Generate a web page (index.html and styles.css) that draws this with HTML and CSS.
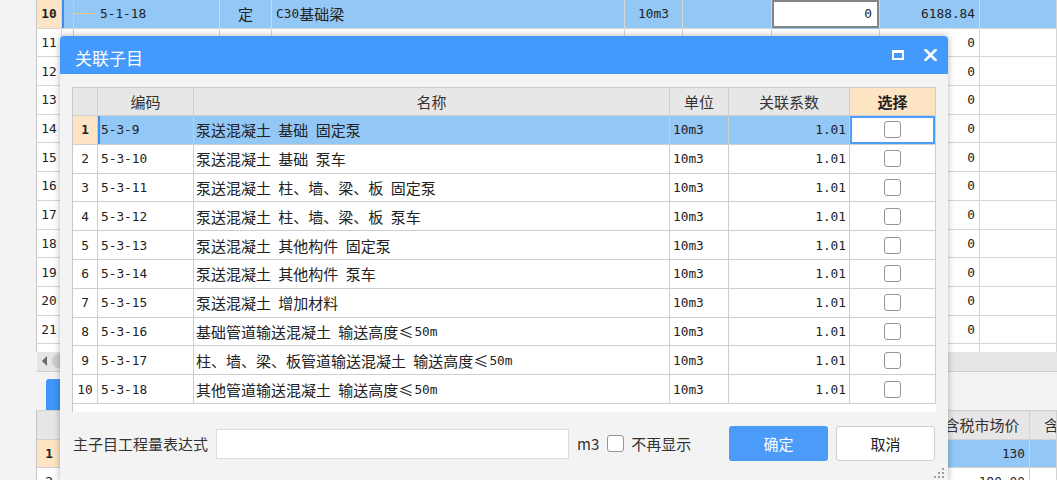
FILE: index.html
```html
<!DOCTYPE html>
<html lang="zh-CN">
<head>
<meta charset="utf-8">
<title>关联子目</title>
<link rel="stylesheet" href="styles.css">
</head>
<body>
<div class="bg">
  <div class="grid">
    <div class="grow sel">
      <div class="gc rn cur num b">10</div>
      <div class="gc code mark"><span class="tree tree-h"></span><span class="num">5-1-18</span></div>
      <div class="gc ctr">定</div>
      <div class="gc"><span class="num">C30</span>基础梁</div>
      <div class="gc ctr num">10m3</div>
      <div class="gc"></div>
      <div class="gc edit num">0</div>
      <div class="gc rt num">6188.84</div>
      <div class="gc"></div>
    </div>
    <div class="grow">
      <div class="gc rn num">11</div>
      <div class="gc code"><span class="tree"></span></div>
      <div class="gc ctr">主</div>
      <div class="gc muted">自动提示：请输入清单简称</div>
      <div class="gc"></div><div class="gc"></div><div class="gc"></div>
      <div class="gc rt num">0</div><div class="gc"></div>
    </div>
    <div class="grow"><div class="gc rn num">12</div><div class="gc"></div><div class="gc"></div><div class="gc"></div><div class="gc"></div><div class="gc"></div><div class="gc"></div><div class="gc rt num">0</div><div class="gc"></div></div>
    <div class="grow"><div class="gc rn num">13</div><div class="gc"></div><div class="gc"></div><div class="gc"></div><div class="gc"></div><div class="gc"></div><div class="gc"></div><div class="gc rt num">0</div><div class="gc"></div></div>
    <div class="grow"><div class="gc rn num">14</div><div class="gc"></div><div class="gc"></div><div class="gc"></div><div class="gc"></div><div class="gc"></div><div class="gc"></div><div class="gc rt num">0</div><div class="gc"></div></div>
    <div class="grow"><div class="gc rn num">15</div><div class="gc"></div><div class="gc"></div><div class="gc"></div><div class="gc"></div><div class="gc"></div><div class="gc"></div><div class="gc rt num">0</div><div class="gc"></div></div>
    <div class="grow"><div class="gc rn num">16</div><div class="gc"></div><div class="gc"></div><div class="gc"></div><div class="gc"></div><div class="gc"></div><div class="gc"></div><div class="gc rt num">0</div><div class="gc"></div></div>
    <div class="grow"><div class="gc rn num">17</div><div class="gc"></div><div class="gc"></div><div class="gc"></div><div class="gc"></div><div class="gc"></div><div class="gc"></div><div class="gc rt num">0</div><div class="gc"></div></div>
    <div class="grow"><div class="gc rn num">18</div><div class="gc"></div><div class="gc"></div><div class="gc"></div><div class="gc"></div><div class="gc"></div><div class="gc"></div><div class="gc rt num">0</div><div class="gc"></div></div>
    <div class="grow"><div class="gc rn num">19</div><div class="gc"></div><div class="gc"></div><div class="gc"></div><div class="gc"></div><div class="gc"></div><div class="gc"></div><div class="gc rt num">0</div><div class="gc"></div></div>
    <div class="grow"><div class="gc rn num">20</div><div class="gc"></div><div class="gc"></div><div class="gc"></div><div class="gc"></div><div class="gc"></div><div class="gc"></div><div class="gc rt num">0</div><div class="gc"></div></div>
    <div class="grow"><div class="gc rn num">21</div><div class="gc"></div><div class="gc"></div><div class="gc"></div><div class="gc"></div><div class="gc"></div><div class="gc"></div><div class="gc rt num">0</div><div class="gc"></div></div>
    <div class="grow tail"><div class="gc"></div><div class="gc"></div><div class="gc"></div><div class="gc"></div><div class="gc"></div><div class="gc"></div><div class="gc"></div><div class="gc"></div><div class="gc"></div></div>
  </div>

  <div class="hscroll"><span class="arrow"></span><span class="thumb"></span></div>
  <div class="tabs"><span class="tab"></span></div>

  <div class="lgrid">
    <div class="lrow head"><div class="lc"></div><div class="lc"></div><div class="lc ctr">含税市场价</div><div class="lc lastcol">含税市场合价</div></div>
    <div class="lrow sel"><div class="lc rn cur num b">1</div><div class="lc"></div><div class="lc rt num">130</div><div class="lc"></div></div>
    <div class="lrow"><div class="lc rn num">2</div><div class="lc"></div><div class="lc rt num top">190.00</div><div class="lc"></div></div>
  </div>
</div>

<div class="dialog">
  <div class="dtitle">
    <span class="ttl">关联子目</span>
    <span class="tbtn">
      <svg width="12" height="10" viewBox="0 0 12 10"><rect x="1" y="1.5" width="10" height="7.5" fill="none" stroke="#fff" stroke-width="2"/><rect x="0" y="0" width="12" height="3" fill="#fff"/></svg>
    </span>
    <span class="tbtn">
      <svg width="13" height="12" viewBox="0 0 13 12"><path d="M1.5 1 L11.5 11 M11.5 1 L1.5 11" stroke="#fff" stroke-width="2.6" stroke-linecap="square"/></svg>
    </span>
  </div>
  <div class="dbody">
    <div class="table">
      <div class="trow thead">
        <div class="tc"></div>
        <div class="tc ctr">编码</div>
        <div class="tc ctr">名称</div>
        <div class="tc ctr">单位</div>
        <div class="tc ctr">关联系数</div>
        <div class="tc ctr pick">选择</div>
      </div>
      <div class="trow sel">
        <div class="tc ctr rn cur num b">1</div>
        <div class="tc num mark">5-3-9</div>
        <div class="tc name">泵送混凝土 基础 固定泵</div>
        <div class="tc num">10m3</div>
        <div class="tc rt num">1.01</div>
        <div class="tc ctr focus"><span class="cb"></span></div>
      </div>
      <div class="trow">
        <div class="tc ctr rn num">2</div><div class="tc num">5-3-10</div>
        <div class="tc name">泵送混凝土 基础 泵车</div>
        <div class="tc num">10m3</div><div class="tc rt num">1.01</div>
        <div class="tc ctr"><span class="cb"></span></div>
      </div>
      <div class="trow">
        <div class="tc ctr rn num">3</div><div class="tc num">5-3-11</div>
        <div class="tc name">泵送混凝土 柱、墙、梁、板 固定泵</div>
        <div class="tc num">10m3</div><div class="tc rt num">1.01</div>
        <div class="tc ctr"><span class="cb"></span></div>
      </div>
      <div class="trow">
        <div class="tc ctr rn num">4</div><div class="tc num">5-3-12</div>
        <div class="tc name">泵送混凝土 柱、墙、梁、板 泵车</div>
        <div class="tc num">10m3</div><div class="tc rt num">1.01</div>
        <div class="tc ctr"><span class="cb"></span></div>
      </div>
      <div class="trow">
        <div class="tc ctr rn num">5</div><div class="tc num">5-3-13</div>
        <div class="tc name">泵送混凝土 其他构件 固定泵</div>
        <div class="tc num">10m3</div><div class="tc rt num">1.01</div>
        <div class="tc ctr"><span class="cb"></span></div>
      </div>
      <div class="trow">
        <div class="tc ctr rn num">6</div><div class="tc num">5-3-14</div>
        <div class="tc name">泵送混凝土 其他构件 泵车</div>
        <div class="tc num">10m3</div><div class="tc rt num">1.01</div>
        <div class="tc ctr"><span class="cb"></span></div>
      </div>
      <div class="trow">
        <div class="tc ctr rn num">7</div><div class="tc num">5-3-15</div>
        <div class="tc name">泵送混凝土 增加材料</div>
        <div class="tc num">10m3</div><div class="tc rt num">1.01</div>
        <div class="tc ctr"><span class="cb"></span></div>
      </div>
      <div class="trow">
        <div class="tc ctr rn num">8</div><div class="tc num">5-3-16</div>
        <div class="tc name">基础管道输送混凝土 输送高度<span class="le">≤</span><span class="num">50m</span></div>
        <div class="tc num">10m3</div><div class="tc rt num">1.01</div>
        <div class="tc ctr"><span class="cb"></span></div>
      </div>
      <div class="trow">
        <div class="tc ctr rn num">9</div><div class="tc num">5-3-17</div>
        <div class="tc name">柱、墙、梁、板管道输送混凝土 输送高度<span class="le">≤</span><span class="num">50m</span></div>
        <div class="tc num">10m3</div><div class="tc rt num">1.01</div>
        <div class="tc ctr"><span class="cb"></span></div>
      </div>
      <div class="trow">
        <div class="tc ctr rn num">10</div><div class="tc num">5-3-18</div>
        <div class="tc name">其他管道输送混凝土 输送高度<span class="le">≤</span><span class="num">50m</span></div>
        <div class="tc num">10m3</div><div class="tc rt num">1.01</div>
        <div class="tc ctr"><span class="cb"></span></div>
      </div>
    </div>

    <div class="footer">
      <span class="label">主子目工程量表达式</span>
      <span class="expr"></span>
      <span class="unit">m3</span>
      <span class="cb big"></span>
      <span class="label nomore">不再显示</span>
      <span class="btns">
        <span class="btn ok">确定</span>
        <span class="btn cancel">取消</span>
      </span>
    </div>
  </div>
  <svg class="grip" width="11" height="11" viewBox="0 0 11 11">
    <rect x="8" y="0" width="2" height="2" fill="#a0a0a0"/>
    <rect x="4" y="4" width="2" height="2" fill="#a0a0a0"/>
    <rect x="8" y="4" width="2" height="2" fill="#a0a0a0"/>
    <rect x="0" y="8" width="2" height="2" fill="#a0a0a0"/>
    <rect x="4" y="8" width="2" height="2" fill="#a0a0a0"/>
    <rect x="8" y="8" width="2" height="2" fill="#a0a0a0"/>
  </svg>
</div>
</body>
</html>
```

FILE: styles.css
```css
* { box-sizing: border-box; }
html, body { margin: 0; padding: 0; }
body {
  width: 1057px;
  height: 480px;
  overflow: hidden;
  position: relative;
  background: #f3f3f3;
  font-family: "Noto Sans CJK SC", "Noto Sans", sans-serif;
  font-size: 15px;
  color: #222;
}

.num { font-family: "DejaVu Sans Mono", "Noto Sans CJK SC", monospace; font-size: 12.8px; }
.le { font-family: "Noto Sans CJK SC", sans-serif; font-size: 15px; margin: 0 1px 0 0; word-spacing: 0; }
.b { font-weight: bold; }
.ctr { justify-content: center; }
.rt { justify-content: flex-end; }

/* ---------- background grid ---------- */
.grid { margin-left: 36px; border-left: 1px solid #c4c4c4; }
.grow {
  display: grid;
  grid-template-columns: 25px 158px 52px 353px 58px 89px 108px 100px 1fr;
  height: 28.7px;
  background: #fff;
}
.grow.tail { height: 7.6px; }
.grow.tail .gc { border-bottom: none; }
.gc {
  display: flex;
  align-items: center;
  padding: 0 4px;
  border-right: 1px solid #d6d6d6;
  border-bottom: 1px solid #d6d6d6;
  white-space: nowrap;
  overflow: hidden;
}
.gc.rn { justify-content: center; padding: 0; }
.grow.sel .gc { background: #93c7f6; }
.grow.sel .gc.rn, .rn.cur { background: #fde4c4 !important; }
.gc.code { padding: 0; }
.gc.mark { box-shadow: inset 2px 0 0 #3b8cf4; }
.tree {
  align-self: stretch;
  width: 22px;
  margin: 0 5px 0 11px;
  background: linear-gradient(#f1c68c, #f1c68c) left top / 1px 100% no-repeat;
}
.tree.tree-h {
  background:
    linear-gradient(#f1c68c, #f1c68c) left top / 1px 100% no-repeat,
    linear-gradient(#f1c68c, #f1c68c) left 13px / 22px 1px no-repeat;
}
.grow.sel .gc.edit {
  background: #fff;
  box-shadow: inset 0 0 0 2px #858585;
  justify-content: flex-end;
  padding-right: 7px;
  border-bottom-color: #93c7f6;
}
.muted { color: #777; }

.hscroll {
  margin-left: 37px;
  height: 20px;
  background: #e5e5e5;
  border-bottom: 1px solid #cdcdcd;
  display: flex;
  align-items: center;
  padding-left: 5px;
}
.arrow {
  width: 0; height: 0;
  border-top: 5px solid transparent;
  border-bottom: 5px solid transparent;
  border-right: 5px solid #6a6a6a;
}
.thumb {
  width: 40px; height: 14px;
  margin-left: 5px;
  border-radius: 7px;
  background: #cdcdcd;
}
.tabs { height: 38px; padding: 7px 0 0 46px; }
.tab {
  display: block;
  width: 60px; height: 31px;
  background: #3f95fb;
  border-radius: 3px 3px 0 0;
}

.lgrid { margin-left: 36px; border-left: 1px solid #c4c4c4; border-top: 1px solid #cdcdcd; }
.lrow {
  display: grid;
  grid-template-columns: 25px 873px 95px 1fr;
  height: 28px;
  background: #fff;
}
.lrow.head { height: 29px; background: #e6e6e6; }
.lc {
  display: flex;
  align-items: center;
  padding: 0 4px;
  border-right: 1px solid #d2d2d2;
  border-bottom: 1px solid #d2d2d2;
  white-space: nowrap;
  overflow: hidden;
}
.lrow.head .lc { font-size: 15px; color: #333; }
.lc.lastcol { padding-left: 14px; }
.lc.rn { justify-content: center; padding: 0; }
.lrow.sel .lc { background: #93c7f6; }
.lc.top { align-items: flex-start; padding-top: 6px; }

/* ---------- dialog ---------- */
.dialog {
  position: absolute;
  left: 60px;
  top: 36px;
  width: 888px;
  height: 446px;
  background: #f3f3f3;
  border-radius: 4px 4px 0 0;
  box-shadow: 0 0 7px rgba(0, 0, 0, 0.3);
  display: flex;
  flex-direction: column;
}
.dtitle {
  height: 38px;
  flex: none;
  background: #4499fc;
  color: #fff;
  font-size: 17px;
  display: flex;
  align-items: center;
  padding: 0 2px 0 15px;
  border-radius: 4px 4px 0 0;
}
.ttl { flex: 1; padding-top: 4px; }
.tbtn { width: 32px; display: flex; justify-content: center; align-items: center; }
.dbody { padding: 13px 12px 0 12px; flex: 1; display: flex; flex-direction: column; }

.table {
  height: 325px;
  background: #fff;
  border-left: 1px solid #c9c9c9;
  border-top: 1px solid #c9c9c9;
}
.trow {
  display: grid;
  grid-template-columns: 25px 96px 476px 59px 121px 1fr;
  height: 28.8px;
}
.trow.thead { height: 28px; background: #e7e7e7; color: #333; }
.tc {
  display: flex;
  align-items: center;
  padding: 0 3px;
  border-right: 1px solid #cfcfcf;
  border-bottom: 1px solid #cfcfcf;
  white-space: nowrap;
  overflow: hidden;
}
.tc.rn { padding: 0; }
.tc.name { padding-left: 2px; word-spacing: 4px; }
.tc.pick { background: #fde4c3; font-weight: bold; color: #222; }
.trow.sel .tc { background: #93c7f6; }
.trow.sel .tc.rn { background: #fde4c4; }
.trow.sel .tc.focus { background: #fff; box-shadow: inset 0 0 0 2px #4b9ef9; }
.tc.mark { box-shadow: inset 2px 0 0 #3b8cf4; }

.cb {
  display: inline-block;
  width: 17px;
  height: 17px;
  border: 1px solid #959595;
  border-radius: 3px;
  background: #fff;
}

.footer {
  margin-top: 14px;
  height: 35px;
  display: flex;
  align-items: center;
  padding-left: 1px;
}
.label { font-size: 15px; color: #333; }
.expr {
  width: 353px;
  height: 30px;
  margin-left: 8px;
  background: #fff;
  border: 1px solid #dcdcdc;
}
.unit { margin-left: 8px; font-size: 15px; color: #333; }
.cb.big { margin-left: 8px; }
.nomore { margin-left: 7px; }
.btns { margin-left: auto; margin-right: 1px; display: flex; gap: 8px; }
.btn {
  width: 99px;
  height: 35px;
  border-radius: 3px;
  display: flex;
  align-items: center;
  justify-content: center;
  font-size: 15px;
}
.btn.ok { background: #4a9cf8; color: #fff; }
.btn.cancel { background: #fff; border: 1px solid #cfcfcf; color: #222; }

.grip { position: absolute; right: 3px; bottom: 3px; }
```
